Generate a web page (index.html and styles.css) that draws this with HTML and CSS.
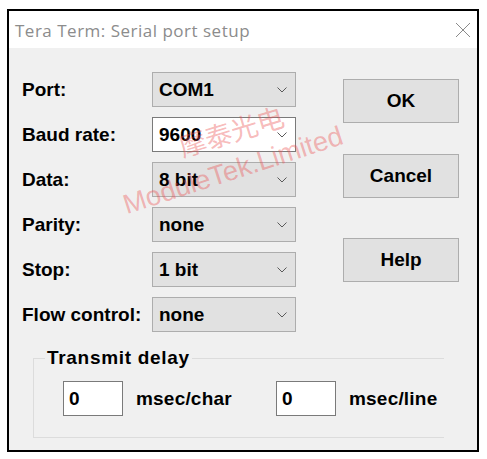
FILE: index.html
```html
<!DOCTYPE html>
<html lang="en">
<head>
    <meta charset="UTF-8">
    <meta name="viewport" content="width=device-width, initial-scale=1.0">
    <title>Serial port setup</title>
    <link rel="stylesheet" href="styles.css">
</head>
<body>
    <div class="window">
        <div class="titlebar">
            <span class="title">Tera Term: Serial port setup</span>
            <svg class="close" width="16" height="16" viewBox="0 0 16 16">
                <path d="M1 1 L15 15 M15 1 L1 15" stroke="#8a8a8a" stroke-width="1" fill="none"/>
            </svg>
        </div>
        <div class="dialog">
            <div class="top">
                <div class="fields">
                    <label>Port:</label>
                    <div class="combo"><span>COM1</span><svg class="chev" width="10" height="6" viewBox="0 0 10 6"><path d="M0.5 0.5 L5 5 L9.5 0.5" stroke="#5a5a5a" fill="none"/></svg></div>
                    <label>Baud rate:</label>
                    <div class="combo focused"><span>9600</span><svg class="chev" width="10" height="6" viewBox="0 0 10 6"><path d="M0.5 0.5 L5 5 L9.5 0.5" stroke="#5a5a5a" fill="none"/></svg></div>
                    <label>Data:</label>
                    <div class="combo"><span>8 bit</span><svg class="chev" width="10" height="6" viewBox="0 0 10 6"><path d="M0.5 0.5 L5 5 L9.5 0.5" stroke="#5a5a5a" fill="none"/></svg></div>
                    <label>Parity:</label>
                    <div class="combo"><span>none</span><svg class="chev" width="10" height="6" viewBox="0 0 10 6"><path d="M0.5 0.5 L5 5 L9.5 0.5" stroke="#5a5a5a" fill="none"/></svg></div>
                    <label>Stop:</label>
                    <div class="combo"><span>1 bit</span><svg class="chev" width="10" height="6" viewBox="0 0 10 6"><path d="M0.5 0.5 L5 5 L9.5 0.5" stroke="#5a5a5a" fill="none"/></svg></div>
                    <label>Flow control:</label>
                    <div class="combo"><span>none</span><svg class="chev" width="10" height="6" viewBox="0 0 10 6"><path d="M0.5 0.5 L5 5 L9.5 0.5" stroke="#5a5a5a" fill="none"/></svg></div>
                </div>
                <div class="buttons">
                    <button class="btn btn-ok">OK</button>
                    <button class="btn btn-cancel">Cancel</button>
                    <button class="btn btn-help">Help</button>
                </div>
            </div>
            <fieldset class="group">
                <legend>Transmit delay</legend>
                <div class="delay-row">
                    <div class="edit">0</div>
                    <span class="unit">msec/char</span>
                    <div class="edit">0</div>
                    <span class="unit">msec/line</span>
                </div>
            </fieldset>
            <!-- watermark stamped over the screenshot -->
            <div class="watermark">
                <span class="wm-cn">摩泰光电</span>
                <span class="wm-en">ModuleTek.Limited</span>
            </div>
        </div>
    </div>
</body>
</html>
```

FILE: styles.css
```css
body {
    margin: 0;
    background: #ffffff;
    font-family: "Liberation Sans", Arial, sans-serif;
}
.window {
    position: relative;
    box-sizing: border-box;
    margin: 9px 0 0 7px;
    width: 472px;
    height: 443px;
    border: 2px solid #000;
    background: #f0f0f0;
}
.titlebar {
    height: 37px;
    background: #fff;
    display: flex;
    align-items: center;
    justify-content: space-between;
    padding: 0 6px 0 6px;
}
.title {
    font-family: "Open Sans", "Noto Sans", sans-serif;
    font-size: 17px;
    letter-spacing: 0.5px;
    color: #8c8c8c;
    margin-top: 1px;
}
.dialog {
    position: relative;
    padding: 24px 0 0 13px;
}
.top {
    display: flex;
}
.fields {
    display: grid;
    grid-template-columns: 130px 144px;
    grid-auto-rows: 35px;
    row-gap: 10px;
    align-items: center;
}
.fields label,
.combo span,
.btn,
.group legend,
.edit,
.unit {
    font-weight: bold;
    font-size: 19px;
    color: #000;
}
.combo {
    box-sizing: border-box;
    height: 35px;
    display: flex;
    align-items: center;
    justify-content: space-between;
    padding: 0 8px 0 6px;
    background: #e1e1e1;
    border: 1px solid #adadad;
}
.combo.focused {
    background: #fff;
    border-color: #7a7a7a;
}
.chev {
    margin-top: 1px;
}
.buttons {
    display: flex;
    flex-direction: column;
    margin-left: 47px;
    padding-top: 7px;
}
.btn {
    box-sizing: border-box;
    width: 116px;
    height: 44px;
    background: #e1e1e1;
    border: 1px solid #adadad;
    font-family: "Liberation Sans", Arial, sans-serif;
    padding: 0;
}
.btn-cancel {
    margin-top: 31px;
}
.btn-help {
    margin-top: 40px;
}
.group {
    box-sizing: border-box;
    margin: 15px 0 0 11px;
    width: 411px;
    border: 1px solid #dcdcdc;
    border-right: none;
    padding: 0 0 21px 11px;
}
.group legend {
    padding: 0 2px;
    line-height: 22px;
    letter-spacing: 0.7px;
}
.delay-row {
    display: grid;
    grid-template-columns: 60px 127px 60px auto;
    column-gap: 13px;
    align-items: center;
    margin: 12px 0 0 18px;
}
.unit {
    letter-spacing: 0.2px;
}
.edit {
    box-sizing: border-box;
    height: 35px;
    background: #fff;
    border: 1px solid #7a7a7a;
    padding: 0 5px;
    line-height: 33px;
}
.watermark {
    position: absolute;
    left: 0;
    top: 0;
    width: 100%;
    height: 100%;
    pointer-events: none;
    color: rgba(235, 80, 80, 0.4);
}
.wm-cn {
    position: absolute;
    left: 168px;
    top: 63px;
    font-family: "Noto Sans CJK SC", sans-serif;
    font-size: 27px;
    transform: rotate(-17deg);
}
.wm-en {
    position: absolute;
    left: 120px;
    top: 141px;
    font-family: "Liberation Sans", Arial, sans-serif;
    font-size: 27.5px;
    transform: rotate(-18deg);
    transform-origin: 0 100%;
}
```
